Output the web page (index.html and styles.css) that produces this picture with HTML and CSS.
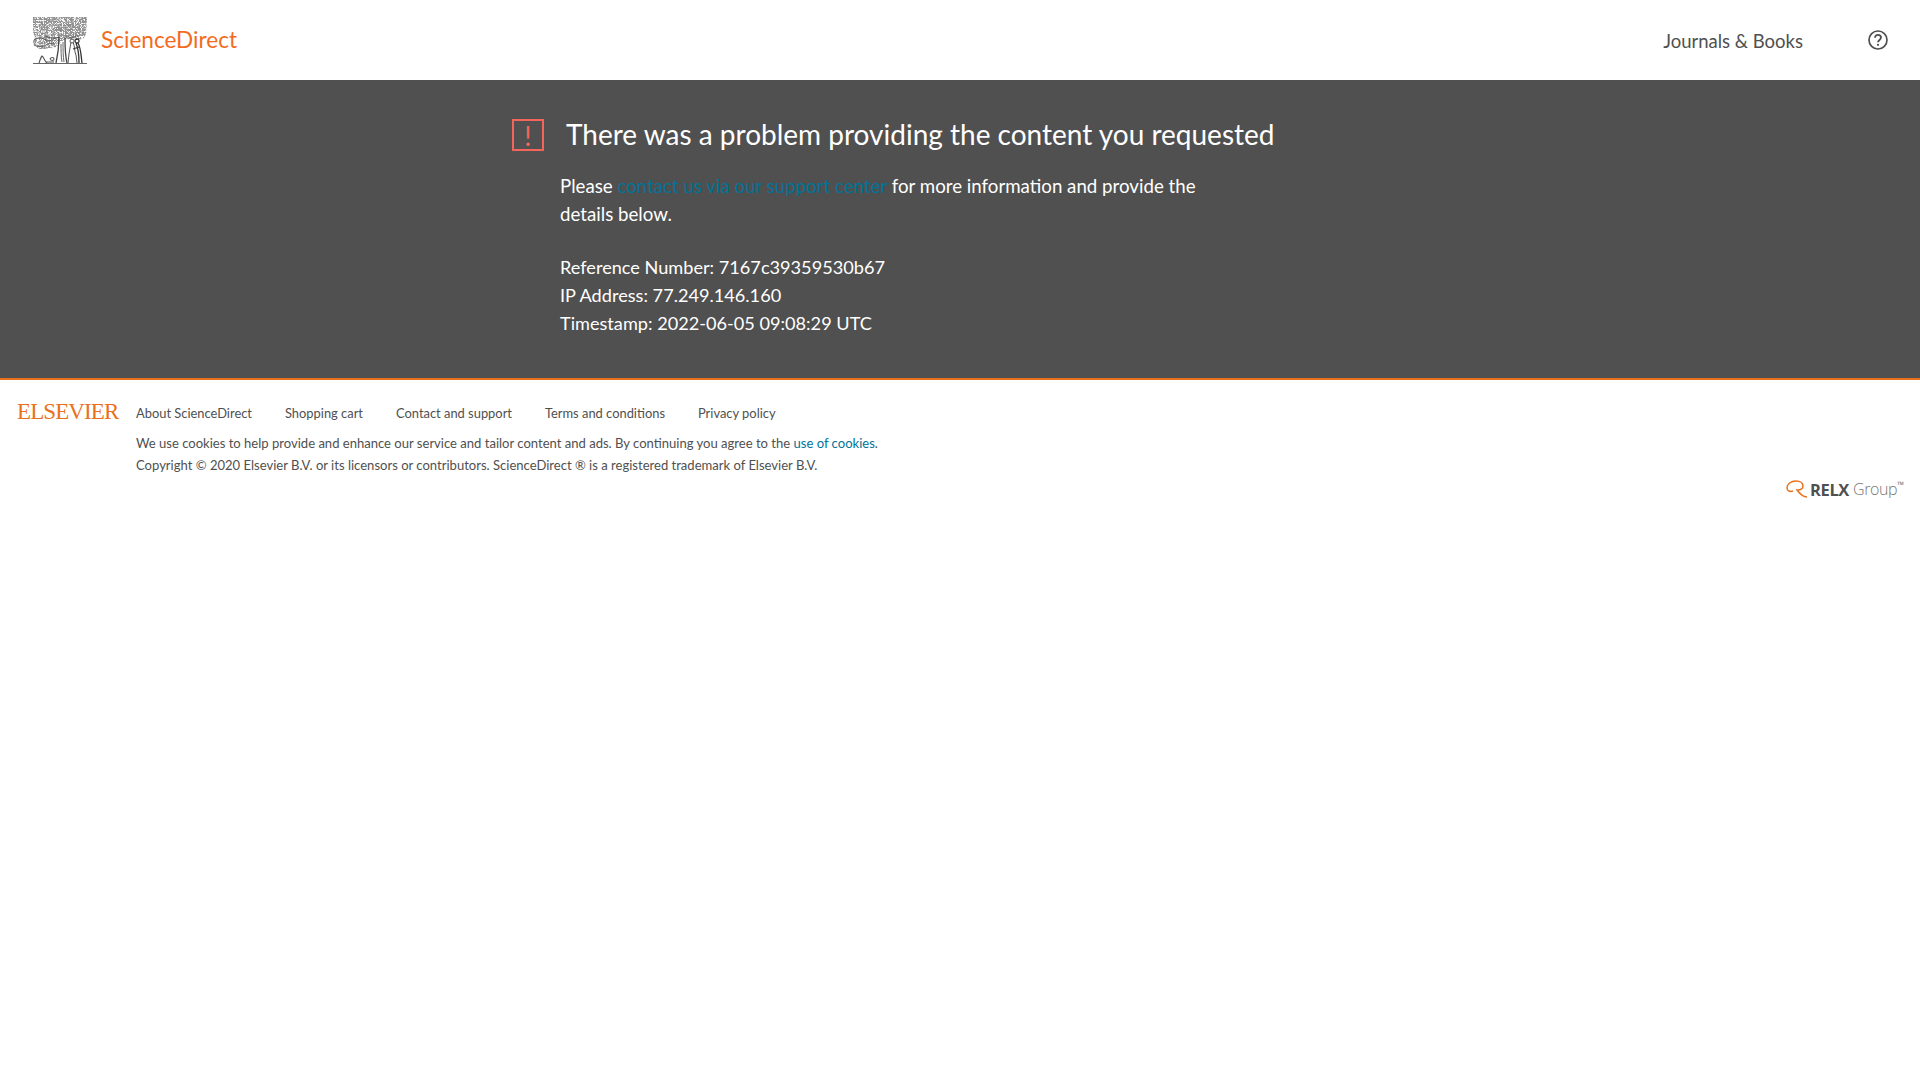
FILE: index.html
```html
<!DOCTYPE html>
<html lang="en">
<head>
<meta charset="utf-8">
<title>ScienceDirect</title>
<link rel="stylesheet" href="styles.css">
</head>
<body>
<header class="top">
  <a class="brand" href="#">
    <svg class="tree" viewBox="0 0 56 50" width="56" height="50" fill="none" stroke="#555" stroke-width="1">
      <defs>
        <filter id="scribble" x="0" y="0" width="100%" height="100%">
          <feTurbulence type="turbulence" baseFrequency="0.42 0.62" numOctaves="2" seed="7" result="n"/>
          <feColorMatrix in="n" type="matrix" values="0 0 0 0 0.28  0 0 0 0 0.28  0 0 0 0 0.28  3.2 3.2 0 0 -0.75" result="t"/>
          <feComposite in="t" in2="SourceAlpha" operator="in"/>
        </filter>
      </defs>
      <path class="canopy" filter="url(#scribble)" d="M1 1h54v9l-1 8-3 5-8 1-10-1-4 3-5 5-6 2H8l-6-3-1-5 2-4-2-5z"/>
      <path d="M2 24c4-3 9-2 12 0s7 0 9-2M3 29c3 2 8 2 11 0s6-1 8-2M13 20c5 2 9 3 14 1M34 20c3 2 7 2 12-1" stroke-width=".9"/>
      <path d="M27 21c0 9-1 17-3 26M33 22c0 9 0 17 2 25" stroke="#444" stroke-width="1.300"/>
      <path d="M29 28c0 6 0 13 1 18M31 26c0 7 0 14 1 20" stroke="#666" stroke-width="1"/>
      <path d="M40 23a2 2 0 1 0 .1 0M39 26c-1 4-1 8-2 12l-1 9M41 26c2 4 1 9 3 13l1 8" stroke="#555" stroke-width="1"/>
      <path d="M45 23a2 2 0 1 0 .1 0M44 27c2 5 3 11 3 20M46 27c3 5 3 13 4 20M47 31l-6 2" stroke="#333" stroke-width="1.300"/>
      <path d="M1 47.500h54" stroke="#666"/>
      <path d="M7 47c1-3 2-6 3-7 2 1 2 5 5 7M18 43c1-2 4-2 4 0s-3 2-4 0M14 46h8" stroke="#555" stroke-width="1.100"/>
    </svg>
    <span class="brand-name">ScienceDirect</span>
  </a>
  <nav class="top-nav">
    <a class="journals" href="#">Journals &amp; Books</a>
    <a class="help" href="#" aria-label="Help">
      <svg viewBox="0 0 20 20" width="20" height="20" fill="none" stroke="#505050" stroke-width="1.700">
        <circle cx="10" cy="10" r="9"/>
        <path d="M7 7.800c0-1.800 1.300-2.900 3-2.900s3 1.100 3 2.700c0 2.300-3 2.400-3 4.700" stroke-width="1.800"/>
        <circle cx="10" cy="14.800" r="1.100" fill="#505050" stroke="none"/>
      </svg>
    </a>
  </nav>
</header>

<main class="banner">
  <div class="message">
    <div class="heading-row">
      <span class="alert">!</span>
      <h1>There was a problem providing the content you requested</h1>
    </div>
    <div class="details">
      <p class="intro">Please <a href="#">contact us via our support center</a> for more information and provide the details below.</p>
      <p class="meta">Reference Number: 7167c39359530b67<br>IP Address: 77.249.146.160<br>Timestamp: 2022-06-05 09:08:29 UTC</p>
    </div>
  </div>
</main>

<footer class="foot">
  <a class="elsevier" href="#">ELSEVIER</a>
  <div class="foot-body">
    <ul class="foot-links">
      <li><a href="#">About ScienceDirect</a></li>
      <li><a href="#">Shopping cart</a></li>
      <li><a href="#">Contact and support</a></li>
      <li><a href="#">Terms and conditions</a></li>
      <li><a href="#">Privacy policy</a></li>
    </ul>
    <p class="legal">We use cookies to help provide and enhance our service and tailor content and ads. By continuing you agree to the <a href="#">use of cookies</a>.</p>
    <p class="legal">Copyright © 2020 Elsevier B.V. or its licensors or contributors. ScienceDirect ® is a registered trademark of Elsevier B.V.</p>
  </div>
  <div class="group-logo">
    <svg viewBox="0 0 22 18" width="22" height="18" fill="none" stroke="#e9711c" stroke-width="1.500">
      <path d="M21 17c-4 0-7-3-10-7 3 0 6-1 6-4 0-3-3-5-7-5C5 1 1 4 1 8c0 3 3 4 6 3"/>
    </svg>
    <span class="group-bold">RELX</span><span class="group-light">Group</span><span class="tm">™</span>
  </div>
</footer>
</body>
</html>
```
FILE: styles.css
```css
* { box-sizing: border-box; }
html, body { margin: 0; padding: 0; background: #fff; }
body { font-family: Lato, "Open Sans", sans-serif; color: #505050; }
a { text-decoration: none; color: inherit; }

.top {
  height: 80px;
  display: flex;
  align-items: center;
  justify-content: space-between;
  padding: 0 32px;
}
.brand { display: flex; align-items: center; gap: 13px; }
.tree { display: block; margin-top: 1px; }
.canopy { fill: #000; stroke: none; }
.brand-name { color: #f26b21; font-size: 22.600px; margin-top: -2px; }
.top-nav { display: flex; align-items: center; gap: 65px; }
.journals { font-size: 18.500px; margin-top: 1px; }
.help { display: block; height: 20px; margin-top: -1px; }

.banner { background: #505050; height: 298px; }
.message { margin-left: 512px; padding-top: 38px; width: 820px; }
.heading-row { display: flex; align-items: center; gap: 22px; }
.alert {
  width: 32px; height: 32px;
  border: 2px solid #f4665c;
  color: #f4665c;
  font-size: 27px;
  font-weight: 400;
  display: flex; align-items: center; justify-content: center;
}
h1 { margin: 0; font-size: 28px; font-weight: 400; color: #fff; line-height: 36px; white-space: nowrap; margin-top: -2px; }
.details { margin-left: 48px; width: 660px; color: #fff; line-height: 28px; }
.intro { margin: 20px 0 0; font-size: 18.700px; }
.intro a { color: #007398; }
.meta { margin: 25px 0 0; font-size: 18.150px; }

.foot {
  border-top: 2px solid #e9711c;
  display: flex;
  padding: 18px 16px 0 17px;
}
.elsevier { font-family: "Liberation Serif", serif; color: #e9711c; font-size: 23px; line-height: 28px; width: 119px; flex: none; letter-spacing: -.9px; }
.foot-body { font-size: 13.050px; }
.foot-links { display: flex; gap: 33px; list-style: none; margin: 0 0 8px; padding: 4px 0 0; line-height: 22px; font-size: 12.900px; }
.legal { margin: 0; line-height: 22px; }
.legal a { color: #007398; }
.group-logo { margin: 82px 0 0 auto; display: flex; align-items: center; height: 18px; color: #505050; font-family: "Open Sans", sans-serif; }
.group-bold { font-weight: 700; font-size: 16.500px; margin-left: 2px; letter-spacing: -.4px; }
.group-light { font-size: 16px; margin-left: 4px; color: #777; font-weight: 300; letter-spacing: -.4px; }
.tm { font-size: 9px; align-self: flex-start; color: #777; line-height: 10px; }
```
